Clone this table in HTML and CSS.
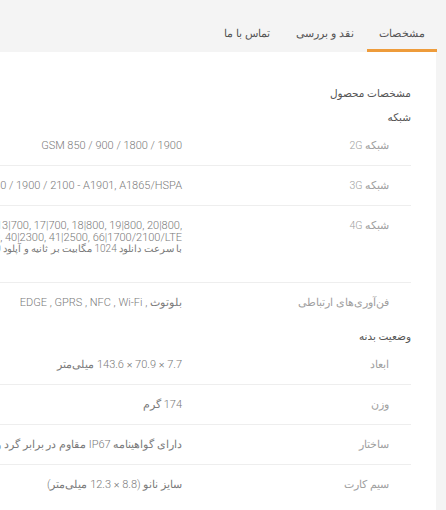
FILE: index.html
```html
<!DOCTYPE html>
<html lang="fa" dir="rtl">
<head>
<meta charset="utf-8">
<title>مشخصات</title>
<link rel="stylesheet" href="styles.css">
</head>
<body>
<div class="page">
  <nav class="tabs">
    <div class="tab tab-specs active">مشخصات</div>
    <div class="tab tab-review">نقد و بررسی</div>
    <div class="tab tab-contact">تماس با ما</div>
  </nav>
  <main class="card">
    <h2 class="title">مشخصات محصول</h2>

    <section class="group">
      <h3 class="group-title">شبکه</h3>
      <div class="row">
        <div class="label">شبکه 2G</div>
        <div class="value"><span dir="ltr">GSM 850 / 900 / 1800 / 1900</span></div>
      </div>
      <div class="row">
        <div class="label">شبکه 3G</div>
        <div class="value"><span dir="ltr">HSDPA 850 / 900 / 1700/2100 / 1900 / 2100 - A1901, A1865/HSPA</span></div>
      </div>
      <div class="row">
        <div class="label">شبکه 4G</div>
        <div class="value multi">
          <div class="line"><span dir="ltr">1|2100, 2|1900, 3|1800, 4|1700/2100, 5|850, 7|2600, 8|900, 12|700, 13|700, 17|700, 18|800, 19|800, 20|800,</span></div>
          <div class="line"><span dir="ltr">25|1900, 26|850, 28|700, 29|700, 30|2300, 34|2000, 38|2600, 39|1900, 40|2300, 41|2500, 66|1700/2100/LTE</span></div>
          <div class="line fa">با سرعت دانلود 1024 مگابیت بر ثانیه و آپلود 150 مگابیت بر ثانیه</div>
        </div>
      </div>
      <div class="row last">
        <div class="label">فن‌آوری‌های ارتباطی</div>
        <div class="value"><span dir="ltr">EDGE , GPRS , NFC , Wi-Fi , بلوتوث</span></div>
      </div>
    </section>

    <section class="group">
      <h3 class="group-title">وضعیت بدنه</h3>
      <div class="row">
        <div class="label">ابعاد</div>
        <div class="value">7.7 × 70.9 × 143.6 میلی‌متر</div>
      </div>
      <div class="row">
        <div class="label">وزن</div>
        <div class="value">174 گرم</div>
      </div>
      <div class="row">
        <div class="label">ساختار</div>
        <div class="value">دارای گواهینامه IP67 مقاوم در برابر گرد و غبار و آب تا عمق یک متر</div>
      </div>
      <div class="row last">
        <div class="label">سیم کارت</div>
        <div class="value">سایز نانو (8.8 × 12.3 میلی‌متر)</div>
      </div>
    </section>
  </main>
</div>
</body>
</html>
```

FILE: styles.css
```css
* {
  box-sizing: border-box;
}

html, body {
  margin: 0;
  padding: 0;
  height: 100%;
  overflow: hidden;
}

body {
  background: #f4f4f4;
  font-family: Roboto, "DejaVu Sans", sans-serif;
  font-size: 11px;
  font-weight: 300;
  color: #777;
  direction: rtl;
}

.page {
  display: flex;
  flex-direction: column;
  height: 100%;
}

.tabs {
  display: flex;
  flex-direction: row;
  padding-right: 9px;
  height: 52px;
  flex: none;
}

.tab {
  padding: 27px 0 8px;
  line-height: 14px;
  font-size: 10.5px;
  color: #555;
  text-align: center;
  border-bottom: 3px solid transparent;
  white-space: nowrap;
}

.tab-specs { width: 70px; }
.tab-review { width: 84px; }
.tab-contact { width: 72px; }

.tab.active {
  border-bottom-color: #ee9c3b;
}

.card {
  flex: 1;
  background: #fff;
  margin-right: 10px;
  padding: 34px 25px 0 0;
  overflow: hidden;
}

.title {
  margin: 0 0 8px;
  font-size: 10.5px;
  font-weight: normal;
  line-height: 16px;
  color: #555;
}

.group {
  margin-top: 7px;
}

.group:first-of-type {
  margin-top: 0;
}

.group-title {
  margin: 0;
  font-size: 10.5px;
  font-weight: normal;
  line-height: 16px;
  color: #555;
}

.row {
  display: grid;
  grid-template-columns: 229px 1fr;
  padding: 13px 0 12px;
  border-bottom: 1px solid #eeeeee;
}

.row.last {
  border-bottom: none;
}

.label {
  padding-right: 22px;
  line-height: 14px;
  font-size: 10.5px;
  color: #a0a0a0;
  white-space: nowrap;
}

.value {
  line-height: 14px;
  color: #7a7a7a;
  white-space: nowrap;
}

.value.multi {
  line-height: 11.5px;
  padding-top: 1px;
  padding-bottom: 15px;
}

.line {
  white-space: nowrap;
}

.line.fa {
  font-size: 10px;
  line-height: 12px;
}
```
